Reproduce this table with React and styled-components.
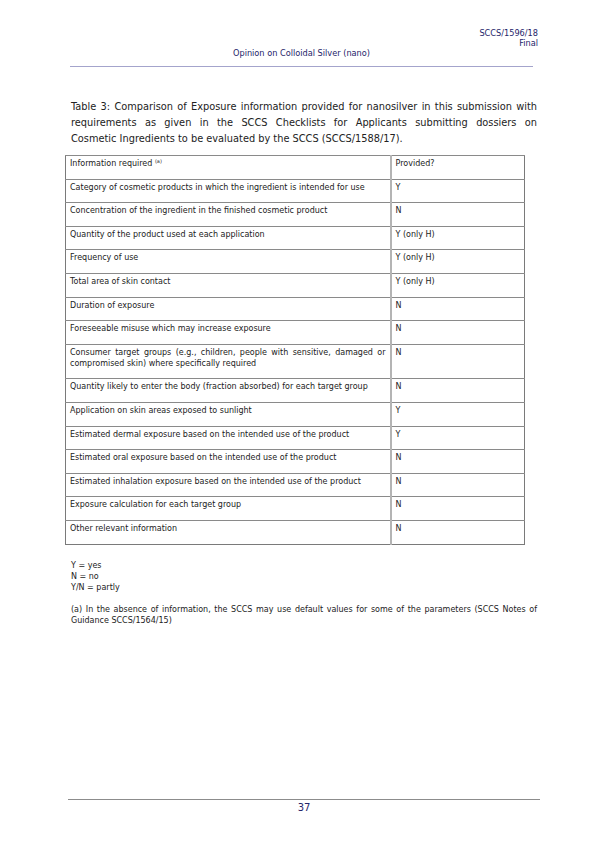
import React from "react";
import styled, { createGlobalStyle } from "styled-components";

const rows = [
  [["Category of cosmetic products in which the ingredient is intended for use"], "Y"],
  [["Concentration of the ingredient in the finished cosmetic product"], "N"],
  [["Quantity of the product used at each application"], "Y (only H)"],
  [["Frequency of use"], "Y (only H)"],
  [["Total area of skin contact"], "Y (only H)"],
  [["Duration of exposure"], "N"],
  [["Foreseeable misuse which may increase exposure"], "N"],
  [
    [
      "Consumer target groups (e.g., children, people with sensitive, damaged or",
      "compromised skin) where specifically required",
    ],
    "N",
  ],
  [["Quantity likely to enter the body (fraction absorbed) for each target group"], "N"],
  [["Application on skin areas exposed to sunlight"], "Y"],
  [["Estimated dermal exposure based on the intended use of the product"], "Y"],
  [["Estimated oral exposure based on the intended use of the product"], "N"],
  [["Estimated inhalation exposure based on the intended use of the product"], "N"],
  [["Exposure calculation for each target group"], "N"],
  [["Other relevant information"], "N"],
];

const captionLines = [
  "Table 3: Comparison of Exposure information provided for nanosilver in this submission with",
  "requirements as given in the SCCS Checklists for Applicants submitting dossiers on",
  "Cosmetic Ingredients to be evaluated by the SCCS (SCCS/1588/17).",
];

const noteLines = [
  "(a) In the absence of information, the SCCS may use default values for some of the parameters (SCCS Notes of",
  "Guidance SCCS/1564/15)",
];

// each source line kept as its own justified line so breaks match the PDF
const JustifiedLines = ({ lines }) =>
  lines.map((line, i) => (
    <Line key={i} $last={i === lines.length - 1}>
      {line}
    </Line>
  ));

const App = () => {
  return (
    <Page>
      <GlobalStyle />
      <Header>
        <RefBlock>
          <span>SCCS/1596/18</span>
          <span>Final</span>
        </RefBlock>
        <Title>Opinion on Colloidal Silver (nano)</Title>
      </Header>

      <Body>
        <Caption>
          <JustifiedLines lines={captionLines} />
        </Caption>

        <Table>
          <colgroup>
            <col style={{ width: "325px" }} />
            <col />
          </colgroup>
          <tbody>
            <tr>
              <td>
                Information required <sup>(a)</sup>
              </td>
              <td>Provided?</td>
            </tr>
            {rows.map(([info, value]) => (
              <tr key={info[0]}>
                <td>
                  <JustifiedLines lines={info} />
                </td>
                <td>{value}</td>
              </tr>
            ))}
          </tbody>
        </Table>

        <Legend>
          <div>Y = yes</div>
          <div>N = no</div>
          <div>Y/N = partly</div>
        </Legend>

        <Note>
          <JustifiedLines lines={noteLines} />
        </Note>
      </Body>

      <Footer>37</Footer>
    </Page>
  );
};

export default App;

const GlobalStyle = createGlobalStyle`
  html, body {
    margin: 0;
    padding: 0;
    background: #ffffff;
  }
  body {
    font-family: "DejaVu Sans", Verdana, sans-serif;
  }
`;

const Page = styled.div`
  width: 595px;
  height: 842px;
  box-sizing: border-box;
  padding-top: 28px;
  position: relative;
  background: #fff;
  color: #1e1e1e;
`;

const Header = styled.header`
  margin: 0 62px 0 70px;
  padding-bottom: 8px;
  border-bottom: 1.5px solid #a4a4cc;
  color: #25256a;
  font-size: 8.2px;
`;

const RefBlock = styled.div`
  display: flex;
  flex-direction: column;
  align-items: flex-end;
  line-height: 10px;
  margin-right: -5px;
`;

const Title = styled.div`
  text-align: center;
  line-height: 10px;
`;

const Body = styled.main`
  padding: 32px 58px 0 71px;
`;

const Line = styled.span`
  display: block;
  text-align: justify;
  text-align-last: ${(p) => (p.$last ? "left" : "justify")};
  white-space: nowrap;
`;

const Caption = styled.div`
  margin: 0 0 8px;
  font-size: 9.8px;
  line-height: 16px;
  color: #222;
`;

const Table = styled.table`
  width: 460px;
  margin-left: -6px;
  border-collapse: collapse;
  table-layout: fixed;
  font-size: 8px;
  color: #222;
  border: 1px solid #7a7a7a;

  td {
    border-top: 1px solid #8a8a8a;
    vertical-align: top;
    padding: 2px 4px 9.6px 4px;
    line-height: 11px;
  }
  td:first-child {
    border-right: 2px solid #b4b4b4;
  }
  sup {
    font-size: 5px;
    line-height: 0;
    vertical-align: 3px;
  }
`;

const Legend = styled.div`
  margin-top: 15px;
  font-size: 8px;
  line-height: 11px;
  color: #222;
`;

const Note = styled.div`
  margin: 11px 0 0;
  font-size: 8px;
  line-height: 11px;
  color: #222;
`;

const Footer = styled.footer`
  position: absolute;
  left: 68px;
  right: 55px;
  top: 799px;
  border-top: 1px solid #8c8c8c;
  padding-top: 2px;
  text-align: center;
  color: #25256a;
  font-size: 10px;
  line-height: 12px;
`;
